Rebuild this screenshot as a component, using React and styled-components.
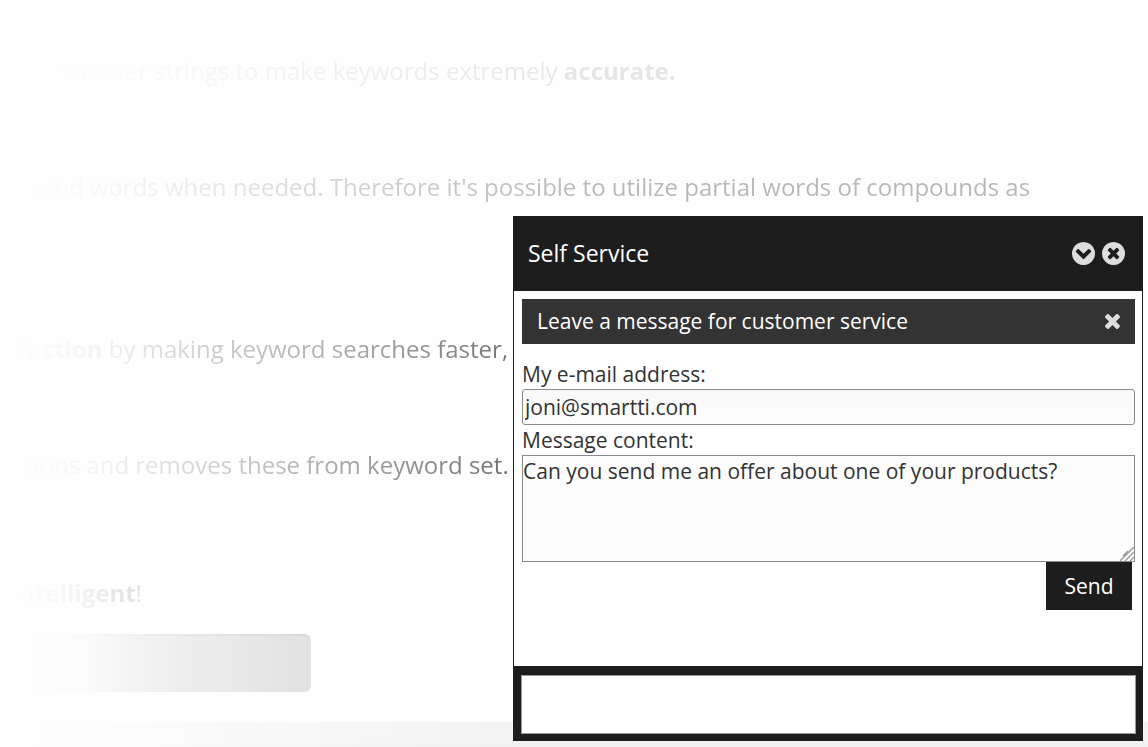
import React, { useState } from 'react';
import styled, { createGlobalStyle } from 'styled-components';

const GlobalStyle = createGlobalStyle`
  * {
    box-sizing: border-box;
  }

  body {
    margin: 0;
    background: #fefefe;
    color: #333;
    font-family: 'Open Sans', 'Noto Sans', sans-serif;
  }
`;

const Page = styled.div`
  position: relative;
  min-height: 100vh;
  display: flex;
  flex-direction: column;
  overflow: hidden;
`;

const Article = styled.main`
  flex: 1;
  padding-top: 54px;
`;

const Line = styled.p`
  margin: 0 0 ${props => props.$gap}px;
  padding-left: ${props => props.$indent}px;
  color: #333;
  font-size: 24px;
  line-height: 34px;
  white-space: nowrap;
  mask-image: linear-gradient(to right, ${props => props.$fade});
`;

const Placeholder = styled.div`
  width: 311px;
  height: 58px;
  border-top: 2px solid #d9d9d9;
  border-radius: 0 6px 6px 0;
  background: #e2e2e2;
  mask-image: linear-gradient(to right, transparent 30px, rgba(0, 0, 0, 0.12) 90px, rgba(0, 0, 0, 0.6) 180px, #000 311px);
`;

const PageFooter = styled.footer`
  height: 25px;
  background: #f3f3f3;
  border-bottom: 4px solid #f0f0f0;
  mask-image: linear-gradient(to right, transparent 10px, rgba(0, 0, 0, 0.15) 130px, rgba(0, 0, 0, 0.7) 350px, #000 500px);
`;

const Chat = styled.section`
  position: absolute;
  right: 5px;
  bottom: 6px;
  width: 55%;
  max-width: 630px;
  background: #fff;
  border: 1px solid #1d1d1d;
  border-width: 0 1px;
`;

const ChatHeader = styled.header`
  display: flex;
  align-items: center;
  justify-content: space-between;
  height: 75px;
  padding: 0 17px 0 14px;
  background: #1d1d1d;
  color: #fff;
`;

const ChatTitle = styled.h1`
  margin: 0;
  padding-bottom: 2px;
  font-size: 23px;
  font-weight: 400;
  line-height: 30px;
`;

const Actions = styled.div`
  display: flex;
  gap: 7px;
`;

const IconButton = styled.button`
  display: flex;
  padding: 0;
  border: 0;
  background: none;
  color: #ddd;
  cursor: pointer;
`;

const ChatBody = styled.div`
  height: 375px;
  padding: 8px 7px 0 8px;
`;

const FormHeader = styled.div`
  display: flex;
  align-items: center;
  justify-content: space-between;
  height: 45px;
  margin-bottom: 15px;
  padding: 0 15px;
  background: #333;
  color: #fff;
`;

const FormTitle = styled.h2`
  margin: 0;
  padding-bottom: 2px;
  font-size: 21px;
  font-weight: 400;
  line-height: 30px;
`;

const Form = styled.form`
  display: flex;
  flex-direction: column;
`;

const Label = styled.label`
  color: #333;
  font-size: 21px;
  line-height: 30px;
`;

const EmailInput = styled.input`
  height: 36px;
  padding: 0 2px;
  border: 1px solid #8a8a8a;
  border-radius: 3px;
  background: linear-gradient(#f9f9f9, #fcfcfc);
  color: #333;
  font: inherit;
  font-size: 21px;
`;

const MessageBox = styled.div`
  position: relative;
  display: flex;
`;

const MessageInput = styled.textarea`
  width: 100%;
  height: 107px;
  padding: 0;
  border: 1px solid #8a8a8a;
  background: #fcfcfc;
  color: #333;
  font: inherit;
  font-size: 21px;
  line-height: 30px;
  resize: none;
`;

const Grip = styled.svg`
  position: absolute;
  right: 1px;
  bottom: 1px;
  pointer-events: none;
`;

const SendButton = styled.button`
  align-self: flex-end;
  width: 86px;
  height: 48px;
  margin-right: 3px;
  padding: 0;
  border: 0;
  background: #1d1d1d;
  color: #fff;
  font: inherit;
  font-size: 21px;
  cursor: pointer;
`;

const ChatFooter = styled.div`
  display: flex;
  height: 75px;
  padding: 9px 6px 7px 7px;
  background: #1d1d1d;
`;

const ChatInput = styled.input`
  flex: 1;
  padding: 0 8px;
  border: 1px solid #999;
  background: #fff;
  font: inherit;
  font-size: 21px;
`;

const circle = 'M1664 896q0 209-103 385.5t-279.5 279.5-385.5 103-385.5-103-279.5-279.5-103-385.5 103-385.5 279.5-279.5 385.5-103 385.5 103 279.5 279.5 103 385.5z';

const icons = {
  collapse: {
    viewBox: '128 128 1536 1536',
    size: 23,
    path: `M941 1253l454-454q19-19 19-45t-19-45l-102-102q-19-19-45-19t-45 19l-307 307-307-307q-19-19-45-19t-45 19l-102 102q-19 19-19 45t19 45l454 454q19 19 45 19t45-19z${circle}`,
  },
  close: {
    viewBox: '128 128 1536 1536',
    size: 23,
    path: `M1277 1122q0-26-19-45l-181-181 181-181q19-19 19-45 0-27-19-46l-90-90q-19-19-46-19-26 0-45 19l-181 181-181-181q-19-19-45-19-27 0-46 19l-90 90q-19 19-19 46 0 26 19 45l181 181-181 181q-19 19-19 45 0 27 19 46l90 90q19 19 46 19 26 0 45-19l181-181 181 181q19 19 45 19 27 0 46-19l90-90q19-19 19-46z${circle}`,
  },
  remove: {
    viewBox: '302 366 1188 1188',
    size: 15,
    path: 'M1490 1322q0 40-28 68l-136 136q-28 28-68 28t-68-28l-294-294-294 294q-28 28-68 28t-68-28l-136-136q-28-28-28-68t28-68l294-294-294-294q-28-28-28-68t28-68l136-136q28-28 68-28t68 28l294 294 294-294q28-28 68-28t68 28l136 136q28 28 28 68t-28 68l-294 294 294 294q28 28 28 68z',
  },
};

const Icon = ({ name }) => {
  const { viewBox, size, path } = icons[name];

  return (
    <svg width={size} height={size} viewBox={viewBox} fill="currentColor" fillRule="evenodd" aria-hidden="true">
      <path d={path} />
    </svg>
  );
};

const fade = (...stops) => stops.map(([alpha, x]) => `rgba(0, 0, 0, ${alpha}) ${x}px`).join(', ');

const App = () => {
  const [email, setEmail] = useState('joni@smartti.com');
  const [message, setMessage] = useState('Can you send me an offer about one of your products?');
  const [reply, setReply] = useState('');

  return (
    <>
      <GlobalStyle />
      <Page>
        <Article>
          <Line $indent={42} $gap={82} $fade={fade([0, 50], [0.02, 150], [0.07, 350], [0.12, 600])}>
            character strings to make keywords extremely <strong>accurate.</strong>
          </Line>
          <Line $indent={25} $gap={128} $fade={fade([0, 30], [0.04, 120], [0.2, 330], [0.34, 600], [0.34, 1000])}>
            ound words when needed. Therefore it's possible to utilize partial words of compounds as
          </Line>
          <Line $indent={18} $gap={82} $fade={fade([0, 20], [0.05, 100], [0.24, 210], [0.38, 330], [0.66, 500])}>
            <strong>faction</strong> by making keyword searches faster,
          </Line>
          <Line $indent={22} $gap={94} $fade={fade([0, 20], [0.05, 100], [0.2, 200], [0.4, 330], [0.68, 500])}>
            sions and removes these from keyword set.
          </Line>
          <Line $indent={12} $gap={24} $fade={fade([0, 20], [0.04, 70], [0.15, 142])}>
            <strong>intelligent</strong>!
          </Line>
          <Placeholder />
        </Article>
        <PageFooter />

        <Chat aria-label="Self Service">
          <ChatHeader>
            <ChatTitle>Self Service</ChatTitle>
            <Actions>
              <IconButton type="button" aria-label="Minimize">
                <Icon name="collapse" />
              </IconButton>
              <IconButton type="button" aria-label="Close">
                <Icon name="close" />
              </IconButton>
            </Actions>
          </ChatHeader>

          <ChatBody>
            <FormHeader>
              <FormTitle>Leave a message for customer service</FormTitle>
              <IconButton type="button" aria-label="Close form">
                <Icon name="remove" />
              </IconButton>
            </FormHeader>
            <Form onSubmit={e => e.preventDefault()}>
              <Label htmlFor="email">My e-mail address:</Label>
              <EmailInput id="email" type="email" value={email} onChange={e => setEmail(e.target.value)} />
              <Label htmlFor="message">Message content:</Label>
              <MessageBox>
                <MessageInput id="message" value={message} onChange={e => setMessage(e.target.value)} />
                <Grip width="14" height="14" viewBox="0 0 14 14" stroke="#999" strokeWidth="1.4" aria-hidden="true">
                  <path d="M0 14L14 0M5 14L14 5M10 14L14 10M3 9L8 4" fill="none" />
                </Grip>
              </MessageBox>
              <SendButton type="submit">Send</SendButton>
            </Form>
          </ChatBody>

          <ChatFooter>
            <ChatInput aria-label="Your question" value={reply} onChange={e => setReply(e.target.value)} />
          </ChatFooter>
        </Chat>
      </Page>
    </>
  );
};

export default App;
